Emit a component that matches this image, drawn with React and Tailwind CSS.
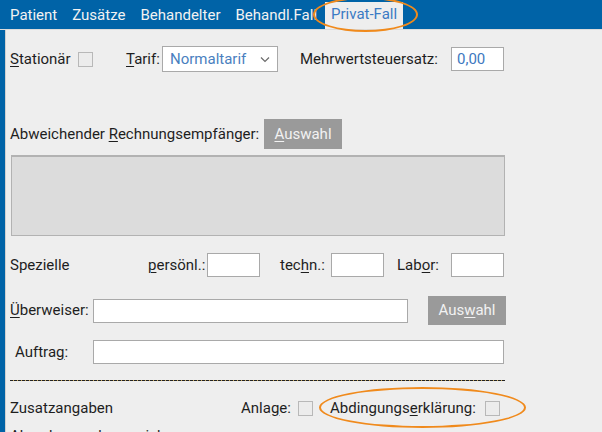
import React from "react";

const U = ({ children }) => <span className="underline underline-offset-[2px] decoration-1">{children}</span>;

const Check = () => (
  <span className="inline-block w-[15px] h-[15px] border border-[#b8b8b8] bg-[#ececec] shrink-0" />
);

const Input = ({ w, children }) => (
  <div className={`${w} h-[24px] bg-white border border-[#a9a9a9] shrink-0 flex items-center px-[5px] text-[#3d78c0]`}>
    {children}
  </div>
);

export default function App() {
  return (
    <div className="relative w-[602px] h-[432px] overflow-hidden bg-[#eeeeee] text-[15px] text-[#1e1e1e] font-['Roboto',sans-serif] leading-none">
      {/* tab bar */}
      <div className="h-[30px] bg-[#0063a7] flex items-end pl-[10px] border-b border-[#dcdcdc]">
        <div className="flex items-center h-[28px] gap-[15px] text-[#f2f2f2]">
          <span>Patient</span>
          <span>Zusätze</span>
          <span>Behandelter</span>
          <span>Behandl.Fall</span>
        </div>
        <div className="ml-[8px] h-[27px] px-[6px] bg-[#eeeeee] text-[#3b7bc4] flex items-start pt-[5px]">
          Privat-Fall
        </div>
      </div>

      <div className="flex h-[402px]">
        <div className="w-[5px] bg-[#0063a7] shrink-0" />
        <div className="w-[1px] bg-[#d0d0d0] shrink-0" />
        <div className="flex-1 pl-[4px] flex flex-col">
          {/* row 1 */}
          <div className="shrink-0 mt-[16px] h-[26px] flex items-center">
            <span className="w-[68px]"><U>S</U>tationär</span>
            <Check />
            <span className="ml-[33px] w-[36px]"><U>T</U>arif:</span>
            <div className="w-[116px] h-[26px] bg-white border border-[#a9a9a9] flex items-center justify-between pl-[7px] pr-[5px] text-[#4a7fc0]">
              <span>Normaltarif</span>
              <svg width="14" height="14" viewBox="0 0 14 14" fill="none" stroke="#6b6b6b" strokeWidth="1.2">
                <path d="M3 5.5 L7 9.5 L11 5.5" />
              </svg>
            </div>
            <span className="ml-[22px] w-[151px]">Mehrwertsteuersatz:</span>
            <Input w="w-[53px]">0,00</Input>
          </div>

          {/* row 2 */}
          <div className="shrink-0 mt-[47px] h-[30px] flex items-center">
            <span className="w-[254px]">Abweichender <U>R</U>echnungsempfänger:</span>
            <div className="w-[78px] h-[30px] bg-[#9a9a9a] text-[#f2f2f2] flex items-center justify-center">
              <span><U>A</U>uswahl</span>
            </div>
          </div>

          {/* gray box */}
          <div className="shrink-0 mt-[6px] ml-[1px] w-[494px] h-[81px] bg-[#dcdcdc] border border-[#b2b2b2] border-t-2" />

          {/* Spezielle */}
          <div className="shrink-0 mt-[17px] h-[24px] flex items-center">
            <span className="w-[138px]">Spezielle</span>
            <span className="w-[59px]"><U>p</U>ersönl.:</span>
            <Input w="w-[53px]" />
            <span className="ml-[20px] w-[51px]">tec<U>h</U>n.:</span>
            <Input w="w-[53px]" />
            <span className="ml-[13px] w-[54px]">Lab<U>o</U>r:</span>
            <Input w="w-[53px]" />
          </div>

          {/* Überweiser */}
          <div className="shrink-0 mt-[19px] h-[29px] flex items-center">
            <span className="w-[83px]"><U>Ü</U>berweiser:</span>
            <Input w="w-[315px]" />
            <div className="ml-[20px] w-[78px] h-[29px] bg-[#9a9a9a] text-[#f2f2f2] flex items-center justify-center">
              <span>Aus<U>w</U>ahl</span>
            </div>
          </div>

          {/* Auftrag */}
          <div className="shrink-0 mt-[15px] h-[24px] flex items-center">
            <span className="w-[83px] pl-[5px]">Auftra<U>g</U>:</span>
            <Input w="w-[411px]" />
          </div>

          {/* dashed line */}
          <div className="shrink-0 mt-[16px] w-[495px] h-[1px] bg-[repeating-linear-gradient(90deg,#222_0_3px,#c9a85a_3px_4px)]" />

          {/* Zusatzangaben */}
          <div className="shrink-0 mt-[18px] h-[18px] flex items-center">
            <span className="w-[231px]">Zusatzangaben</span>
            <span className="w-[57px]">Anla<U>g</U>e:</span>
            <Check />
            <span className="ml-[17px] w-[155px]">Abdingungs<U>e</U>rklärung:</span>
            <Check />
          </div>

          <div className="shrink-0 mt-[10px] h-[18px] flex items-center">
            <span>Abrechnungskennzeichen</span>
          </div>
        </div>
      </div>

      {/* highlight ellipses */}
      <div className="absolute left-[313px] top-[-3px] w-[105px] h-[35px] border-2 border-[#f08a1c] rounded-[50%] pointer-events-none" />
      <div className="absolute left-[319px] top-[387px] w-[207px] h-[41px] border-2 border-[#f08a1c] rounded-[50%] pointer-events-none" />
    </div>
  );
}
